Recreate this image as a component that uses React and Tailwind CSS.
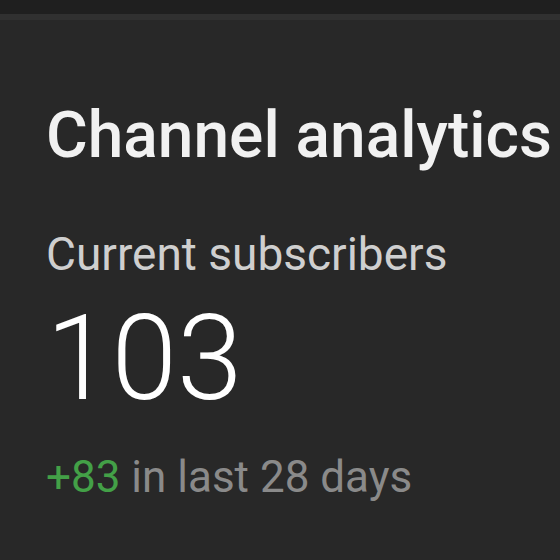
export default function App() {
  return (
    <div className="w-[560px] h-[560px] overflow-hidden bg-[#282828] flex flex-col" style={{ fontFamily: "Roboto, 'Liberation Sans', sans-serif" }}>
      <div className="h-[14px] bg-[#1f1f1f] shrink-0" />
      <div className="h-[6px] bg-[#303030] shrink-0" />
      <div className="pl-[46px] pt-[80px] flex flex-col">
        <div className="text-[64px] leading-[72px] font-medium text-[#f1f1f1] whitespace-nowrap">Channel analytics</div>
        <div className="mt-[56px] text-[46px] leading-[52px] text-[#cfcfcf] whitespace-nowrap">Current subscribers</div>
        <div className="mt-[19px] text-[118px] leading-[120px] font-light text-white whitespace-nowrap">103</div>
        <div className="mt-[32px] text-[44px] leading-[52px] text-[#8a8a8a] whitespace-nowrap"><span className="text-[#43a047]">+83</span> in last 28 days</div>
      </div>
    </div>
  );
}
